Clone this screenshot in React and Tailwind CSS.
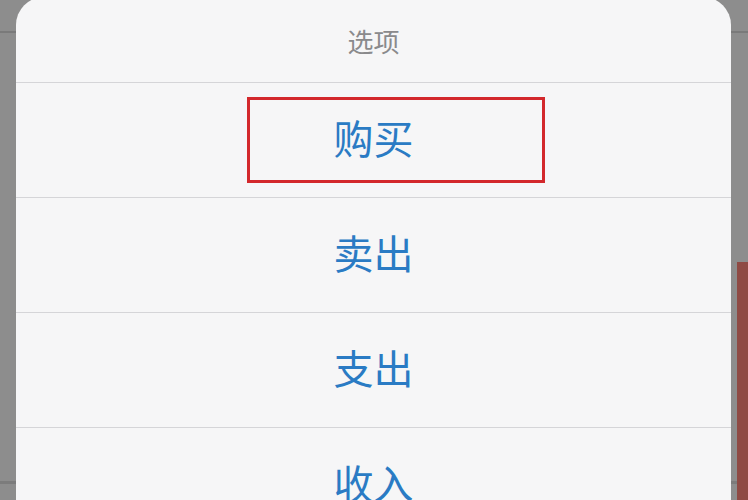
import React from 'react';

const options = ['购买', '卖出', '支出', '收入'];

const App = () => {
  return (
    <div
      className="relative w-[748px] h-[500px] overflow-hidden bg-[#8d8d8d]"
      style={{ fontFamily: '"Noto Sans CJK SC", "Noto Sans", sans-serif' }}
    >
      {/* blurred page behind the sheet */}
      <div className="absolute left-0 top-[31px] w-full h-[2px] bg-[#7a7a7a]" />
      <div className="absolute left-0 top-[481px] w-full h-[3px] bg-[#7c7c7c]" />
      <div className="absolute right-0 top-[262px] w-[11px] h-[238px] bg-[#8f4a44]" />

      {/* action sheet */}
      <div className="relative ml-[16px] -mt-[3px] w-[715px] h-[510px] rounded-t-[28px] bg-[#f6f6f7] flex flex-col">
        <div className="h-[85px] shrink-0 flex items-center justify-center text-[26px] text-[#8a8a8c] pt-[1px]">
          选项
        </div>
        {options.map((label, i) => (
          <div
            key={label}
            className="relative h-[115px] shrink-0 border-t border-[#d5d5d8] flex items-center justify-center pb-[6px]"
          >
            <span className="text-[40px] text-[#2a7bc4]">{label}</span>
            {i === 0 && (
              <div className="absolute left-[231px] top-[14px] w-[298px] h-[86px] border-[3px] border-[#d3282c]" />
            )}
          </div>
        ))}
      </div>
    </div>
  );
};

export default App;
